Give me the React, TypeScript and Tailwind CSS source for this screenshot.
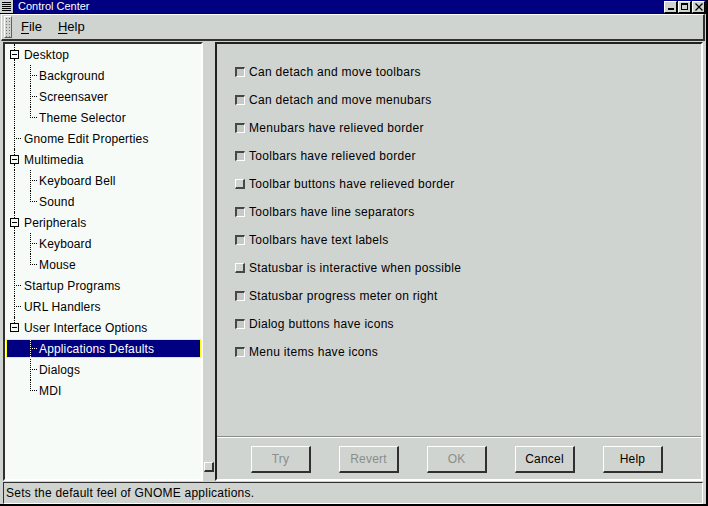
import React from "react";

type TreeNode = {
  label: string;
  depth: 0 | 1;
  expander?: boolean;
  lastChild?: boolean;
  underLast?: boolean;
  lastRoot?: boolean;
  selected?: boolean;
};

const tree: TreeNode[] = [
  { label: "Desktop", depth: 0, expander: true },
  { label: "Background", depth: 1 },
  { label: "Screensaver", depth: 1 },
  { label: "Theme Selector", depth: 1, lastChild: true },
  { label: "Gnome Edit Properties", depth: 0 },
  { label: "Multimedia", depth: 0, expander: true },
  { label: "Keyboard Bell", depth: 1 },
  { label: "Sound", depth: 1, lastChild: true },
  { label: "Peripherals", depth: 0, expander: true },
  { label: "Keyboard", depth: 1 },
  { label: "Mouse", depth: 1, lastChild: true },
  { label: "Startup Programs", depth: 0 },
  { label: "URL Handlers", depth: 0 },
  { label: "User Interface Options", depth: 0, expander: true, lastRoot: true },
  { label: "Applications Defaults", depth: 1, underLast: true, selected: true },
  { label: "Dialogs", depth: 1, underLast: true },
  { label: "MDI", depth: 1, underLast: true, lastChild: true },
];

const options: { label: string; checked: boolean }[] = [
  { label: "Can detach and move toolbars", checked: true },
  { label: "Can detach and move menubars", checked: true },
  { label: "Menubars have relieved border", checked: true },
  { label: "Toolbars have relieved border", checked: true },
  { label: "Toolbar buttons have relieved border", checked: false },
  { label: "Toolbars have line separators", checked: true },
  { label: "Toolbars have text labels", checked: true },
  { label: "Statusbar is interactive when possible", checked: false },
  { label: "Statusbar progress meter on right", checked: true },
  { label: "Dialog buttons have icons", checked: true },
  { label: "Menu items have icons", checked: true },
];

const buttons: { label: string; disabled: boolean }[] = [
  { label: "Try", disabled: true },
  { label: "Revert", disabled: true },
  { label: "OK", disabled: true },
  { label: "Cancel", disabled: false },
  { label: "Help", disabled: false },
];

function TreeRow({ node }: { node: TreeNode }) {
  const rootLine = node.depth === 0 ? !node.expander || !node.lastRoot : !node.underLast;
  return (
    <div className="relative h-[21px] flex items-center">
      {node.selected && (
        <div className="absolute left-[1px] right-0 top-[1px] bottom-[1px] bg-[#000080] border border-[#ffff00]" />
      )}
      {/* root level connector */}
      {node.depth === 0 && node.expander && (
        <>
          <div className="absolute left-[9px] top-0 h-[6px] border-l border-dotted border-black" />
          {!node.lastRoot && (
            <div className="absolute left-[9px] top-[15px] bottom-0 border-l border-dotted border-black" />
          )}
          <div className="absolute left-[5px] top-[6px] w-[9px] h-[9px] border border-black flex items-center justify-center">
            <div className="w-[5px] h-[1px] bg-black" />
          </div>
        </>
      )}
      {node.depth === 0 && !node.expander && (
        <>
          <div className="absolute left-[9px] top-0 bottom-0 border-l border-dotted border-black" />
          <div className="absolute left-[11px] top-[10px] w-[5px] border-t border-dotted border-black" />
        </>
      )}
      {node.depth === 1 && rootLine && (
        <div className="absolute left-[9px] top-0 bottom-0 border-l border-dotted border-black" />
      )}
      {node.depth === 1 && (
        <>
          <div
            className={`absolute left-[25px] top-0 border-l border-dotted ${
              node.selected ? "border-white" : "border-black"
            } ${node.lastChild ? "h-[11px]" : "bottom-0"}`}
          />
          <div
            className={`absolute left-[27px] top-[10px] w-[5px] border-t border-dotted ${
              node.selected ? "border-white" : "border-black"
            }`}
          />
        </>
      )}
      <span
        className={`relative whitespace-nowrap tracking-[0.15px] ${node.depth === 0 ? "pl-[19px]" : "pl-[34px]"} ${
          node.selected ? "text-white" : "text-black"
        }`}
      >
        {node.label}
      </span>
    </div>
  );
}

function CheckBox({ checked }: { checked: boolean }) {
  return checked ? (
    <div className="w-[10px] h-[10px] shrink-0 border-t-2 border-l-2 border-t-[#454845] border-l-[#454845] border-b border-r border-b-white border-r-white bg-[#c6cac6]" />
  ) : (
    <div className="w-[10px] h-[10px] shrink-0 border-t border-l border-t-white border-l-white border-b-2 border-r-2 border-b-[#454845] border-r-[#454845] bg-[#d0d4d0]" />
  );
}

function TitleButton({ kind }: { kind: "min" | "max" | "close" }) {
  return (
    <div className="w-[13px] h-[12px] bg-[#d0d4d0] border-t border-l border-white border-b border-r border-b-black border-r-black flex items-center justify-center">
      {kind === "min" && <div className="w-[6px] h-[2px] bg-black mt-[5px]" />}
      {kind === "max" && <div className="w-[7px] h-[7px] border border-black border-t-2" />}
      {kind === "close" && (
        <svg width="8" height="8" viewBox="0 0 8 8">
          <path d="M0.5 0.5 L7.5 7.5 M7.5 0.5 L0.5 7.5" stroke="black" strokeWidth="1.2" />
        </svg>
      )}
    </div>
  );
}

export default function App() {
  return (
    <div className="w-[708px] h-[506px] bg-[#d0d4d0] flex flex-col overflow-hidden font-['Liberation_Sans',Arial,sans-serif] text-[12px] text-black border-r-2 border-b-2 border-r-black border-b-black">
      {/* title bar */}
      <div className="h-[14px] bg-[#000080] flex items-center border-b border-black">
        <div className="w-[14px] h-[13px] bg-[#d0d4d0] border-r border-black flex flex-col justify-center gap-[1px] px-[2px]">
          <div className="h-[1px] bg-black" />
          <div className="h-[1px] bg-black" />
          <div className="h-[1px] bg-black" />
          <div className="h-[1px] bg-black" />
          <div className="h-[1px] bg-black" />
        </div>
        <span className="ml-[4px] text-white text-[11px] leading-none">Control Center</span>
        <div className="ml-auto flex gap-[1px] pr-[1px]">
          <TitleButton kind="min" />
          <TitleButton kind="max" />
          <TitleButton kind="close" />
        </div>
      </div>

      {/* menu bar */}
      <div className="h-[27px] mx-[1px] flex items-center text-[13px] border-t border-l border-white border-b-2 border-r-2 border-b-[#303030] border-r-[#303030]">
        <div className="ml-[2px] w-[8px] h-[22px] border border-t-white border-l-white border-b-[#606060] border-r-[#606060] bg-[radial-gradient(#707070_0.6px,transparent_0.8px)] bg-[length:3px_3px]" />
        <span className="ml-[9px]">
          <span className="underline underline-offset-2">F</span>ile
        </span>
        <span className="ml-[16px]">
          <span className="underline underline-offset-2">H</span>elp
        </span>
      </div>

      {/* main */}
      <div className="flex-1 flex pl-[3px] pt-[1px] min-h-0">
        {/* tree */}
        <div className="w-[200px] flex flex-col border-2 border-t-[#303030] border-l-[#303030] border-b-white border-r-white bg-[#f7fbf7]">
          <div className="flex flex-col">
            {tree.map((n) => (
              <TreeRow key={n.label} node={n} />
            ))}
          </div>
        </div>
        {/* scrollbar */}
        <div className="w-[12px] flex flex-col justify-end pb-[9px] pl-[1px]">
          <div className="w-[10px] h-[10px] border-t border-l border-white border-b-2 border-r-2 border-b-[#303030] border-r-[#303030]" />
        </div>
        {/* right panel */}
        <div className="w-[488px] flex flex-col border-2 border-t-[#202020] border-l-[#202020] border-b-white border-r-white">
          <div className="flex-1 flex flex-col pt-[14px] pl-[18px]">
            {options.map((o) => (
              <div key={o.label} className="h-[28px] flex items-center gap-[4px]">
                <CheckBox checked={o.checked} />
                <span className="whitespace-nowrap tracking-[0.3px]">{o.label}</span>
              </div>
            ))}
          </div>
          <div className="h-[2px] border-t border-t-[#8a8e8a] border-b border-b-white" />
          <div className="flex gap-[28px] pl-[34px] pt-[8px] pb-[6px]">
            {buttons.map((b) => (
              <div
                key={b.label}
                className={`w-[60px] h-[27px] flex items-center justify-center tracking-[0.2px] border-t border-l border-white border-b-2 border-r-2 border-b-[#303030] border-r-[#303030] ${
                  b.disabled ? "text-[#8a8e8a]" : "text-black"
                }`}
              >
                {b.label}
              </div>
            ))}
          </div>
        </div>
      </div>

      {/* status bar */}
      <div className="h-[22px] ml-[3px] mr-[3px] mt-[1px] flex items-center border border-t-[#303030] border-l-[#303030] border-b-white border-r-white">
        <span className="ml-[2px] tracking-[0.23px]">Sets the default feel of GNOME applications.</span>
      </div>
    </div>
  );
}
